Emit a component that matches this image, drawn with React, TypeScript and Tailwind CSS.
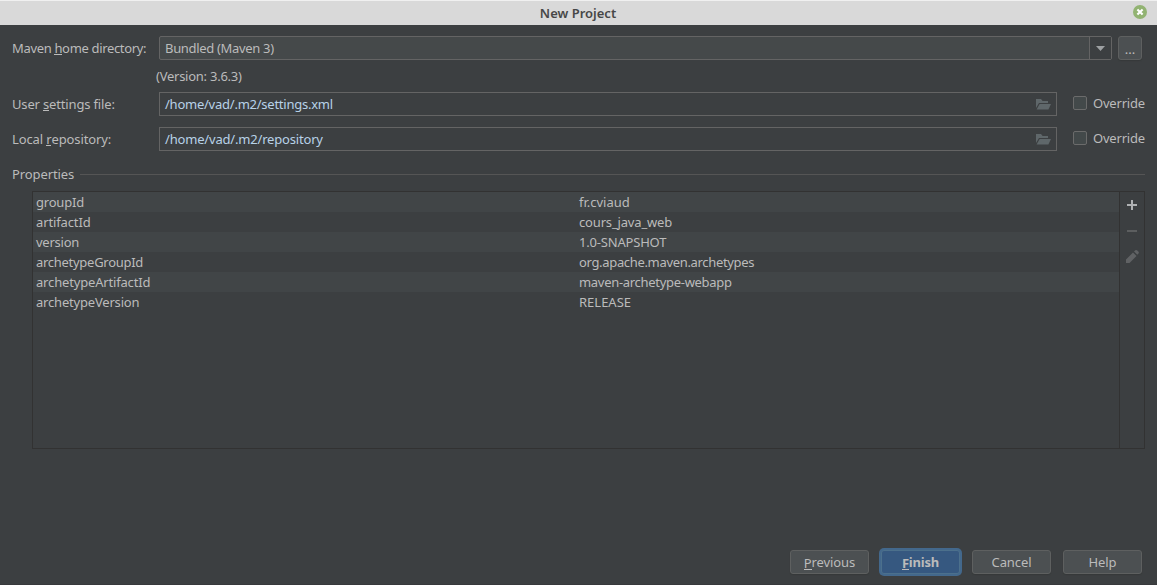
import type { ReactNode } from "react";

const rows: { name: string; value: string; nameClass: string; valueClass: string }[] = [
  { name: "groupId", value: "fr.cviaud", nameClass: "tracking-[-0.2px]", valueClass: "" },
  { name: "artifactId", value: "cours_java_web", nameClass: "tracking-[-0.12px]", valueClass: "tracking-[-0.16px]" },
  { name: "version", value: "1.0-SNAPSHOT", nameClass: "tracking-[-0.25px]", valueClass: "tracking-[-0.19px]" },
  { name: "archetypeGroupId", value: "org.apache.maven.archetypes", nameClass: "tracking-[-0.28px]", valueClass: "tracking-[-0.33px]" },
  { name: "archetypeArtifactId", value: "maven-archetype-webapp", nameClass: "tracking-[-0.17px]", valueClass: "tracking-[-0.3px]" },
  { name: "archetypeVersion", value: "RELEASE", nameClass: "tracking-[-0.19px]", valueClass: "" },
];

function Key({ children }: { children: ReactNode }) {
  return <span className="inline-block h-[15px] border-b border-current leading-[16px]">{children}</span>;
}

function FolderIcon() {
  return (
    <svg width="16" height="12" viewBox="0 0 16 12" className="mr-[5px]" fill="#5f676a">
      <path d="M1 1h5l1.6 2H13v2H4L1 10z" />
      <path d="M4.6 6H16l-2.6 5.5H1.6z" />
    </svg>
  );
}

function PathRow({
  label,
  labelClass,
  value,
  valueClass,
}: {
  label: ReactNode;
  labelClass: string;
  value: string;
  valueClass: string;
}) {
  return (
    <div className="flex h-6 items-center">
      <div className="w-[147px] shrink-0">
        <span className={labelClass}>{label}</span>
      </div>
      <div className="flex h-6 w-[898px] items-center justify-between border border-[#646464] bg-[#3c3f41] pl-[5px] text-[#b8d2e8]">
        <span className={valueClass}>{value}</span>
        <FolderIcon />
      </div>
      <label className="ml-4 flex items-center gap-[6px] pb-[2px]">
        <span className="size-[14px] rounded-[2px] border border-[#6b6b6b] bg-[#43494a]" />
        <span className="tracking-[-0.2px]">Override</span>
      </label>
    </div>
  );
}

function DialogButton({ children }: { children: ReactNode }) {
  return (
    <button className="flex h-6 w-[79px] items-center justify-center rounded-[3px] border border-[#5e6060] bg-[#4c5052] tracking-[-0.1px] shadow-[0_1px_1px_#36393a]">
      {children}
    </button>
  );
}

export default function App() {
  return (
    <div className="flex h-[585px] w-[1157px] flex-col overflow-hidden border-b border-[#38393c] bg-[#3c3f41] font-['Noto_Sans',sans-serif] text-[13px] leading-[20px] whitespace-nowrap text-[#bbbbbb]">
      <header className="flex h-[25px] shrink-0 items-center justify-end border-t border-[#f0f0f0] bg-[#d9d9d9] pr-[10px]">
        <h1 className="flex-1 pl-[23px] text-center font-semibold text-[#474747]">New Project</h1>
        <svg width="14" height="14" viewBox="0 0 14 14" className="mb-[2px]">
          <circle cx="7" cy="7" r="7" fill="#92b372" />
          <path d="M4.4 4.4l5.2 5.2M9.6 4.4l-5.2 5.2" stroke="#fff" strokeWidth="2.1" />
        </svg>
      </header>
      <main className="flex flex-col pt-[11px] pl-3">
        <div className="flex h-6 items-center">
          <div className="w-[147px] shrink-0 tracking-[-0.34px]">
            Maven <Key>h</Key>ome directory:
          </div>
          <div className="flex h-6 w-[953px] rounded-[2px] border border-[#646464] bg-[#45494a]">
            <span className="flex flex-1 items-center pl-[5px] tracking-[-0.32px]">Bundled (Maven 3)</span>
            <span className="flex w-[22px] items-center justify-center border-l border-[#646464] bg-[#3c3f41]">
              <svg width="9" height="5" viewBox="0 0 9 5">
                <path d="M0 0h9L4.5 5z" fill="#9da0a2" />
              </svg>
            </span>
          </div>
          <button className="ml-[6px] flex h-6 w-6 items-center justify-center rounded-[3px] border border-[#5e6060] bg-[#4c5052] pt-[2px] shadow-[0_1px_1px_#36393a]">
            ...
          </button>
        </div>
        <div className="mt-[6px] h-5 pl-[144px]">
          <span className="tracking-[-0.25px]">(Version: 3.6.3)</span>
        </div>
        <div className="mt-[6px] flex flex-col gap-[11px]">
          <PathRow
            label={<>User <Key>s</Key>ettings file:</>}
            labelClass="tracking-[-0.16px]"
            value="/home/vad/.m2/settings.xml"
            valueClass="tracking-[-0.24px]"
          />
          <PathRow
            label={<>Local <Key>r</Key>epository:</>}
            labelClass="tracking-[-0.12px]"
            value="/home/vad/.m2/repository"
            valueClass="tracking-[-0.18px]"
          />
        </div>
        <div className="mt-[13px] flex h-5 items-center">
          <span className="w-[68px] tracking-[-0.1px]">Properties</span>
          <span className="h-px w-[1065px] bg-[#555555]" />
        </div>
        <section className="mt-[7px] ml-5 flex h-[258px] w-[1113px] border border-[#323232]">
          <div className="flex-1">
            {rows.map((row) => (
              <div key={row.name} className="grid h-5 grid-cols-[543px_1fr] pl-[3px] odd:bg-[#414547]">
                <span className={row.nameClass}>{row.name}</span>
                <span className={row.valueClass}>{row.value}</span>
              </div>
            ))}
          </div>
          <div className="flex w-[25px] flex-col items-center border-l border-[#323232] pt-[5px]">
            <svg width="16" height="68" viewBox="0 0 16 68">
              <path d="M3 7h10v2H3zM7 3h2v10H7z" fill="#afb1b3" />
              <path d="M3 33h10v2H3z" fill="#5c5e5f" />
              <path
                d="M2 66v-3.5l7-7 3.5 3.5-7 7zM10 54.5l1.3-1.2q1-.7 2 .2l1 1q1 1 .2 2l-1.2 1.3z"
                fill="#606264"
              />
            </svg>
          </div>
        </section>
      </main>
      <footer className="mt-[101px] flex h-6 items-center justify-end gap-3 pr-[15px]">
        <DialogButton>
          <Key>P</Key>revious
        </DialogButton>
        <button className="flex h-6 w-[79px] items-center justify-center rounded-[3px] border border-[#4c708c] bg-[#365880] font-bold tracking-[-0.2px] ring-2 ring-[#43688c]">
          <Key>F</Key>inish
        </button>
        <DialogButton>Cancel</DialogButton>
        <DialogButton>Help</DialogButton>
      </footer>
    </div>
  );
}
